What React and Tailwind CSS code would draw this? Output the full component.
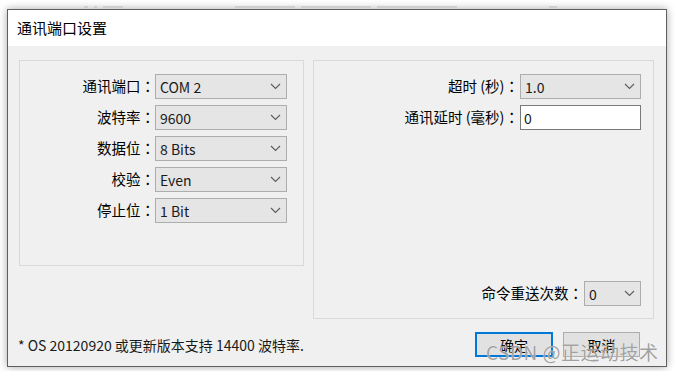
import React from 'react'

const font = { fontFamily: '"Noto Sans CJK SC", "Liberation Sans", sans-serif' }
// the fullwidth colon sits centred in the TC/JP forms, as on the Windows dialog
const colonFont = { fontFamily: '"Noto Sans CJK TC", sans-serif' }

function Chevron() {
  return (
    <svg width="11" height="7" viewBox="0 0 11 7" className="shrink-0">
      <polyline points="1,1 5.5,5.5 10,1" fill="none" stroke="#5c5c5c" strokeWidth="1.1" />
    </svg>
  )
}

function Combo({ value, className = '' }) {
  return (
    <div
      className={`flex h-[25px] items-center justify-between border border-[#adadad] bg-[#e5e5e5] pl-[4px] pr-[5px] text-[14px] leading-none text-[#1a1a1a] ${className}`}
    >
      <span>{value}</span>
      <Chevron />
    </div>
  )
}

function Row({ label, children, labelW = '' }) {
  return (
    <div className="flex h-[25px] items-center">
      <div className={`${labelW} text-right text-[14.5px] leading-none text-black`}>
        {label}
        <span style={colonFont}>：</span>
      </div>
      {children}
    </div>
  )
}

function Blot({ w }) {
  return <div className={`h-[2px] ${w} bg-[#cfcfcf]`} />
}

export default function App() {
  const left = [
    ['通讯端口', 'COM 2'],
    ['波特率', '9600'],
    ['数据位', '8 Bits'],
    ['校验', 'Even'],
    ['停止位', '1 Bit'],
  ]

  return (
    <div className="relative h-[371px] w-[675px] overflow-hidden bg-white" style={font}>
      {/* bottom edge of the page text behind the dialog */}
      <div className="flex h-[9px] items-end gap-[6px] pb-[1px] pl-[84px]">
        <Blot w="w-[4px]" />
        <Blot w="w-[3px]" />
        <Blot w="w-[20px]" />
        <div className="w-[100px]" />
        <Blot w="w-[60px]" />
        <Blot w="w-[70px]" />
        <Blot w="w-[80px]" />
        <div className="w-[80px]" />
        <Blot w="w-[8px]" />
      </div>

      <div className="ml-[7px] flex h-[358px] w-[660px] flex-col border border-[#5f5f5f] bg-[#f0f0f0] shadow-[0_0_8px_rgba(0,0,0,0.35)]">
        <div className="flex h-[36px] items-center bg-white pl-[9px] text-[15px] text-black">通讯端口设置</div>

        <div className="flex flex-1 flex-col pl-[11px] pt-[14px]">
          <div className="flex items-start gap-[9px]">
            <div className="flex h-[206px] w-[285px] flex-col gap-[6px] border border-[#d9d9d9] pt-[13px]">
              {left.map(([l, v]) => (
                <Row key={l} label={l} labelW="w-[135px]">
                  <Combo value={v} className="w-[132px]" />
                </Row>
              ))}
            </div>

            <div className="flex h-[259px] w-[341px] flex-col border border-[#d9d9d9] pb-[12px] pr-[12px] pt-[13px]">
              <div className="flex flex-col items-end gap-[6px]">
                <Row label="超时 (秒)">
                  <Combo value="1.0" className="ml-[1px] w-[121px]" />
                </Row>
                <Row label="通讯延时 (毫秒)">
                  <div className="ml-[1px] flex h-[25px] w-[121px] items-center border border-[#7a7a7a] bg-white pl-[3px] text-[14px] leading-none text-[#1a1a1a]">
                    0
                  </div>
                </Row>
              </div>
              <div className="mt-auto flex justify-end">
                <Row label="命令重送次数">
                  <Combo value="0" className="ml-[1px] w-[57px]" />
                </Row>
              </div>
            </div>
          </div>

          <div className="mt-[13px] flex items-center justify-between pr-[26px]">
            <div className="-ml-[1px] text-[14px] leading-none text-[#1a1a1a]">* OS 20120920 或更新版本支持 14400 波特率.</div>
            <div className="flex gap-[10px]">
              <button className="flex h-[25px] w-[78px] items-center justify-center border-2 border-[#0078d7] bg-[#e1e1e1] text-[14px] leading-none text-black">
                确定
              </button>
              <button className="flex h-[25px] w-[77px] items-center justify-center border border-[#adadad] bg-[#e1e1e1] text-[14px] leading-none text-black">
                取消
              </button>
            </div>
          </div>
        </div>
      </div>

      <div className="absolute left-[486px] top-[342px] text-[19px] leading-none tracking-[0.5px] text-[#888888]/80 [text-shadow:0_0_1px_#ffffff]">
        CSDN @正运动技术
      </div>
    </div>
  )
}
